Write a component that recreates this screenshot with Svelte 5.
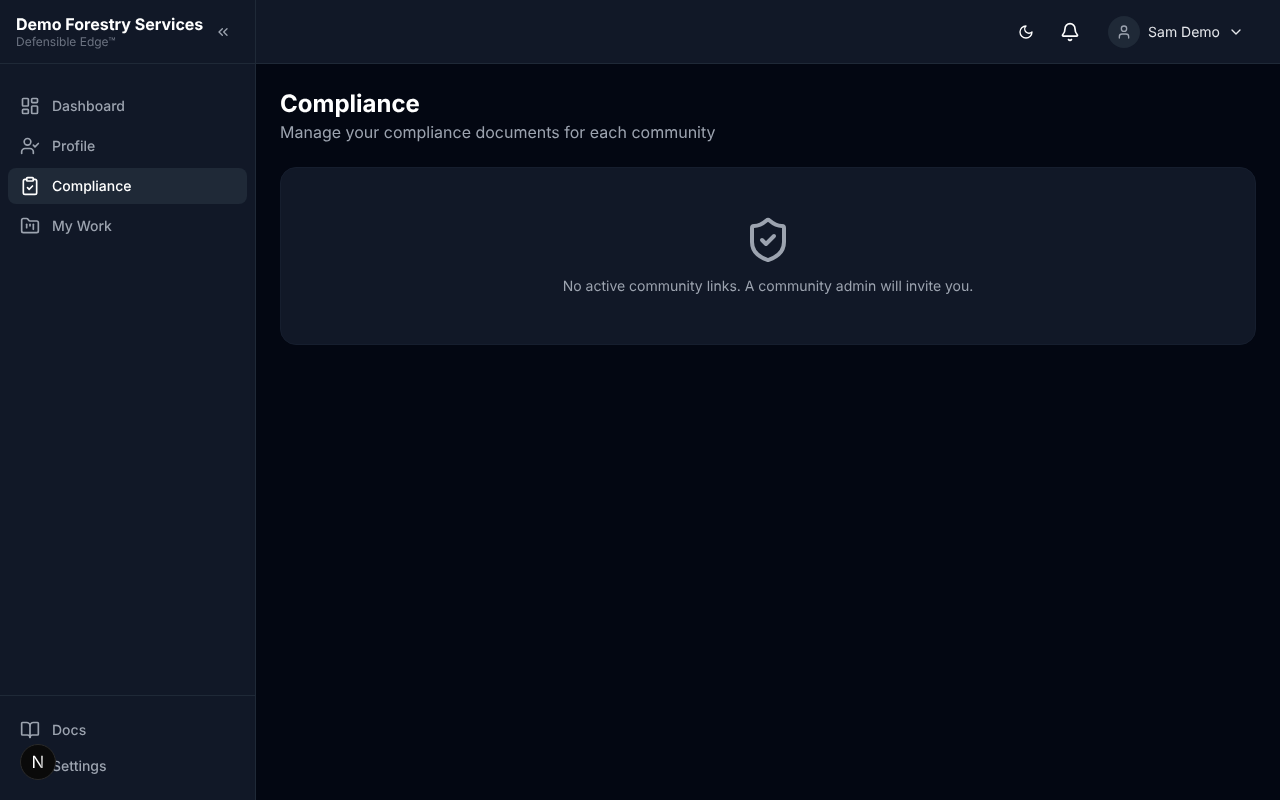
<script>
  const navItems = [
    { label: "Dashboard", icon: "dashboard" },
    { label: "Profile", icon: "profile" },
    { label: "Compliance", icon: "compliance", active: true },
    { label: "My Work", icon: "work" }
  ];
  const footItems = [
    { label: "Docs", icon: "docs" },
    { label: "Settings", icon: "settings" }
  ];
</script>

{#snippet icon(name)}
  <svg class="nav-icon" viewBox="0 0 24 24" aria-hidden="true">
    {#if name === "dashboard"}
      <rect x="3" y="3" width="7" height="9" rx="1" />
      <rect x="14" y="3" width="7" height="5" rx="1" />
      <rect x="14" y="12" width="7" height="9" rx="1" />
      <rect x="3" y="16" width="7" height="5" rx="1" />
    {:else if name === "profile"}
      <path d="M16 21v-2a4 4 0 0 0-4-4H6a4 4 0 0 0-4 4v2" />
      <circle cx="9" cy="7" r="4" />
      <polyline points="16 11 18 13 22 9" />
    {:else if name === "compliance"}
      <rect x="8" y="2" width="8" height="4" rx="1" />
      <path d="M16 4h2a2 2 0 0 1 2 2v14a2 2 0 0 1-2 2H6a2 2 0 0 1-2-2V6a2 2 0 0 1 2-2h2" />
      <path d="m9 14 2 2 4-4" />
    {:else if name === "work"}
      <path d="M4 20h16a2 2 0 0 0 2-2V8a2 2 0 0 0-2-2h-7.93a2 2 0 0 1-1.66-.9l-.82-1.2A2 2 0 0 0 7.93 3H4a2 2 0 0 0-2 2v13c0 1.1.9 2 2 2Z" />
      <path d="M8 10v4" />
      <path d="M12 10v2" />
      <path d="M16 10v6" />
    {:else if name === "docs"}
      <path d="M12 7v14" />
      <path d="M3 18a1 1 0 0 1-1-1V4a1 1 0 0 1 1-1h5a4 4 0 0 1 4 4 4 4 0 0 1 4-4h5a1 1 0 0 1 1 1v13a1 1 0 0 1-1 1h-6a3 3 0 0 0-3 3 3 3 0 0 0-3-3z" />
    {:else if name === "settings"}
      <circle cx="12" cy="12" r="3" />
      <circle cx="12" cy="12" r="9" />
    {/if}
  </svg>
{/snippet}

<div class="layout">
  <aside class="sidebar">
    <div class="brand">
      <div class="brand-text">
        <div class="org">Demo Forestry Services</div>
        <div class="product">Defensible Edge™</div>
      </div>
      <button class="collapse" aria-label="Collapse">
        <svg viewBox="0 0 24 24"><path d="m11 17-5-5 5-5" /><path d="m18 17-5-5 5-5" /></svg>
      </button>
    </div>
    <nav class="nav">
      {#each navItems as item}
        <a class="nav-item" class:active={item.active} href="#top">
          {@render icon(item.icon)}
          <span>{item.label}</span>
        </a>
      {/each}
    </nav>
    <div class="foot">
      {#each footItems as item}
        <a class="nav-item" href="#top">
          {@render icon(item.icon)}
          <span>{item.label}</span>
        </a>
      {/each}
    </div>
  </aside>

  <div class="content">
    <header class="topbar">
      <button class="top-btn" aria-label="Theme">
        <svg viewBox="0 0 24 24"><path d="M12 3a6 6 0 0 0 9 9 9 9 0 1 1-9-9Z" /></svg>
      </button>
      <button class="top-btn bell" aria-label="Notifications">
        <svg viewBox="0 0 24 24">
          <path d="M10.268 21a2 2 0 0 0 3.464 0" />
          <path d="M3.262 15.326A1 1 0 0 0 4 17h16a1 1 0 0 0 .74-1.673C19.41 13.956 18 12.499 18 8A6 6 0 0 0 6 8c0 4.499-1.411 5.956-2.738 7.326" />
        </svg>
      </button>
      <div class="user">
        <span class="avatar">
          <svg viewBox="0 0 24 24">
            <path d="M19 21v-2a4 4 0 0 0-4-4H9a4 4 0 0 0-4 4v2" />
            <circle cx="12" cy="7" r="4" />
          </svg>
        </span>
        <span class="user-name">Sam Demo</span>
        <svg class="chevron" viewBox="0 0 24 24"><path d="m6 9 6 6 6-6" /></svg>
      </div>
    </header>

    <main class="main">
      <h1>Compliance</h1>
      <p class="sub">Manage your compliance documents for each community</p>
      <section class="card">
        <svg class="shield" viewBox="0 0 24 24">
          <path d="M20 13c0 5-3.5 7.5-7.66 8.95a1 1 0 0 1-.67-.01C7.5 20.5 4 18 4 13V6a1 1 0 0 1 1-1c2 0 4.5-1.2 6.24-2.72a1.17 1.17 0 0 1 1.52 0C14.51 3.81 17 5 19 5a1 1 0 0 1 1 1z" />
          <path d="m9 12 2 2 4-4" />
        </svg>
        <p>No active community links. A community admin will invite you.</p>
      </section>
    </main>
  </div>

  <div class="dev-badge"><span>N</span></div>
</div>

<style>
  :global(body) {
    margin: 0;
    background: #030712;
    font-family: Inter, "Liberation Sans", sans-serif;
    text-rendering: geometricPrecision;
  }

  svg {
    fill: none;
    stroke: currentColor;
    stroke-width: 2;
    stroke-linecap: round;
    stroke-linejoin: round;
    display: block;
  }

  .layout {
    display: flex;
    height: 800px;
    overflow: hidden;
    will-change: transform;
  }

  .sidebar {
    width: 255px;
    flex-shrink: 0;
    display: flex;
    flex-direction: column;
    background: #111827;
    border-right: 1px solid #1f2937;
  }

  .brand {
    height: 63px;
    display: flex;
    align-items: center;
    justify-content: space-between;
    padding: 0 20px 0 16px;
    border-bottom: 1px solid #1f2937;
  }

  .org {
    font-size: 16px;
    line-height: 20px;
    font-weight: 700;
    color: #fff;
    white-space: nowrap;
  }

  .product {
    font-size: 12px;
    line-height: 16px;
    color: #6b7280;
  }

  .collapse {
    width: 24px;
    height: 24px;
    padding: 4px;
    border: 0;
    background: none;
    color: #9ca3af;
  }

  .nav {
    flex: 1;
    display: flex;
    flex-direction: column;
    gap: 4px;
    padding: 24px 8px 0;
  }

  .nav-item {
    height: 36px;
    display: flex;
    align-items: center;
    gap: 12px;
    padding: 0 12px;
    border-radius: 8px;
    font-size: 14px;
    font-weight: 500;
    color: #9ca3af;
    text-decoration: none;
  }

  .nav-item.active {
    background: #1f2937;
    color: #fff;
  }

  .nav-icon {
    width: 20px;
    height: 20px;
    flex-shrink: 0;
  }

  .foot {
    padding: 16px 8px;
    border-top: 1px solid #1f2937;
  }

  .content {
    flex: 1;
    min-width: 0;
    display: flex;
    flex-direction: column;
  }

  .topbar {
    height: 62px;
    display: flex;
    align-items: center;
    justify-content: flex-end;
    padding: 1px 28px 0 24px;
    background: #111827;
    border-bottom: 1px solid #1f2937;
  }

  .top-btn {
    width: 36px;
    height: 36px;
    padding: 10px;
    margin-right: 8px;
    border: 0;
    background: none;
    color: #fff;
  }

  .top-btn svg {
    width: 16px;
    height: 16px;
  }

  .bell {
    padding: 8px;
    margin-right: 12px;
  }

  .bell svg {
    width: 20px;
    height: 20px;
  }

  .user {
    display: flex;
    align-items: center;
    gap: 8px;
    padding: 0 8px;
  }

  .avatar {
    width: 32px;
    height: 32px;
    border-radius: 50%;
    background: #1f2937;
    color: #9ca3af;
    display: flex;
    align-items: center;
    justify-content: center;
  }

  .avatar svg {
    width: 16px;
    height: 16px;
  }

  .user-name {
    font-size: 14px;
    color: #e5e7eb;
  }

  .chevron {
    width: 16px;
    height: 16px;
    color: #e5e7eb;
  }

  .main {
    flex: 1;
    padding: 24px;
  }

  h1 {
    margin: 0;
    font-size: 24px;
    line-height: 32px;
    font-weight: 700;
    color: #fff;
  }

  .sub {
    margin: 0 0 23px;
    font-size: 16px;
    line-height: 24px;
    color: #9ca3af;
  }

  .card {
    display: flex;
    flex-direction: column;
    align-items: center;
    padding: 48px 48px 47px;
    background: #111827;
    border: 1px solid #161e2e;
    border-radius: 16px;
  }

  .shield {
    width: 48px;
    height: 48px;
    color: #9ca3af;
    margin-bottom: 12px;
  }

  .card p {
    margin: 0;
    font-size: 14px;
    line-height: 21px;
    color: #9ca3af;
  }

  .dev-badge {
    position: absolute;
    left: 20px;
    top: 744px;
    width: 36px;
    height: 36px;
    box-sizing: border-box;
    border-radius: 50%;
    background: #0a0a0a;
    border: 1px solid #2a2a2a;
    display: flex;
    align-items: center;
    justify-content: center;
    padding-top: 1px;
    font-size: 17px;
    font-weight: 400;
  }

  .dev-badge span {
    background: linear-gradient(100deg, #fff 62%, rgba(255, 255, 255, 0.4) 100%);
    background-clip: text;
    -webkit-background-clip: text;
    color: transparent;
  }
</style>
